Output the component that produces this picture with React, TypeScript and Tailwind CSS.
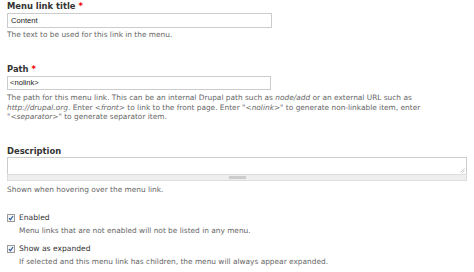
import React from "react";

const desc = "text-[7.4px] leading-[9.8px] text-[#666]";

function Label({ children, required }: { children: React.ReactNode; required?: boolean }) {
  return (
    <div className="text-[8.4px] font-bold leading-[10px] text-[#333]">
      {children}
      {required && <span className="ml-[3px] text-[#e00]">*</span>}
    </div>
  );
}

function Check({ label }: { label: string }) {
  return (
    <div className="flex items-center gap-[4px] text-[7.6px] leading-[10px] text-[#333]">
      <svg width="8" height="8" viewBox="0 0 8 8" className="shrink-0">
        <rect x="0.5" y="0.5" width="7" height="7" fill="#f4f4f4" stroke="#9a9a9a" />
        <path d="M2 4.2 L3.4 5.8 L6 2" fill="none" stroke="#2c5aa0" strokeWidth="1.2" />
      </svg>
      <span>{label}</span>
    </div>
  );
}

export default function App() {
  return (
    <div className="w-[474px] h-[272px] overflow-hidden bg-white px-[7px] pt-[1px] font-['DejaVu_Sans',sans-serif]">
      <Label required>Menu link title</Label>
      <div className="mt-[2px] flex h-[15px] w-[265px] items-center border border-[#ccc] px-[3px] text-[7.6px] text-[#222] font-['Liberation_Sans',sans-serif]">
        Content
      </div>
      <div className={`${desc} mt-[2px]`}>The text to be used for this link in the menu.</div>

      <div className="mt-[24px]">
        <Label required>Path</Label>
      </div>
      <div className="mt-[2px] flex h-[14px] w-[264px] items-center border border-[#ccc] px-[2px] text-[7.6px] text-[#222] font-['Liberation_Sans',sans-serif]">
        &lt;nolink&gt;
      </div>
      <div className={`${desc} mt-[3px] whitespace-nowrap`}>
        The path for this menu link. This can be an internal Drupal path such as <em>node/add</em> or an external URL such as
        <br />
        <em>http://drupal.org</em>. Enter <em>&lt;front&gt;</em> to link to the front page. Enter "<em>&lt;nolink&gt;</em>" to generate non-linkable item, enter
        <br />
        "<em>&lt;separator&gt;</em>" to generate separator item.
      </div>

      <div className="mt-[24px]">
        <Label>Description</Label>
      </div>
      <div className="mt-[1px] w-[460px]">
        <div className="relative h-[17px] border border-b-0 border-[#ccc]">
          <svg width="5" height="5" viewBox="0 0 5 5" className="absolute bottom-[1px] right-[1px]">
            <path d="M4.5 0.5 L0.5 4.5 M4.5 2.5 L2.5 4.5" stroke="#aaa" strokeWidth="0.7" />
          </svg>
        </div>
        <div className="flex h-[7px] items-center justify-center border border-[#ddd] bg-[#eee]">
          <div className="h-[3px] w-[17px] bg-[#ccc]" />
        </div>
      </div>
      <div className={`${desc} mt-[4px]`}>Shown when hovering over the menu link.</div>

      <div className="mt-[18px]">
        <Check label="Enabled" />
      </div>
      <div className={`${desc} ml-[12px] mt-[3px]`}>Menu links that are not enabled will not be listed in any menu.</div>
      <div className="mt-[8px]">
        <Check label="Show as expanded" />
      </div>
      <div className={`${desc} ml-[12px] mt-[3px]`}>
        If selected and this menu link has children, the menu will always appear expanded.
      </div>
    </div>
  );
}
